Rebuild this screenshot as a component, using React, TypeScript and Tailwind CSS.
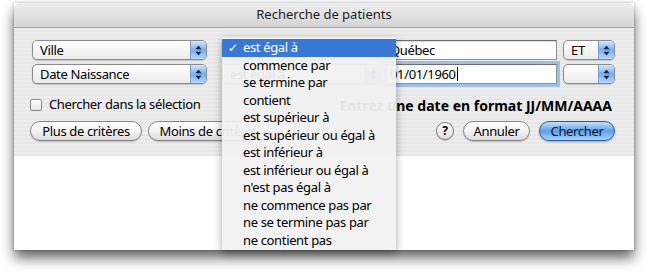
import React from 'react';

const operators = [
  'est égal à',
  'commence par',
  'se termine par',
  'contient',
  'est supérieur à',
  'est supérieur ou égal à',
  'est inférieur à',
  'est inférieur ou égal à',
  "n'est pas égal à",
  'ne commence pas par',
  'ne se termine pas par',
  'ne contient pas',
];

const PopupArrows: React.FC = () => (
  <svg width="7" height="11" viewBox="0 0 7 11">
    <path d="M3.5 0.5 L6.5 4.2 H0.5 Z M3.5 10.5 L6.5 6.8 H0.5 Z" fill="#16233a" />
  </svg>
);

const Popup: React.FC<{ label?: string; className: string }> = ({ label, className }) => (
  <div
    className={`flex h-[20px] ${className} overflow-hidden rounded-[5px] border border-[#8b8b8b] bg-gradient-to-b from-white to-[#ececec] shadow-[0_1px_1px_rgba(0,0,0,0.18)]`}
  >
    <div className="flex-1 truncate pl-[7px] text-[13px] leading-[18px] text-black">{label}</div>
    <div className="flex w-[16px] items-center justify-center border-l border-[#7b9cc8] bg-gradient-to-b from-[#d3e7fb] via-[#74aef0] to-[#b5d7fa]">
      <PopupArrows />
    </div>
  </div>
);

const TextField: React.FC<{ children: React.ReactNode; focused?: boolean }> = ({ children, focused }) => (
  <div
    className={`flex h-[20px] w-[171px] items-center border border-[#939393] border-t-[#6e6e6e] bg-white pl-[3px] text-[13px] leading-[18px] text-black ${
      focused ? 'shadow-[0_0_0_3px_#9dbfe9]' : 'shadow-[inset_0_1px_1px_rgba(0,0,0,0.15)]'
    }`}
  >
    {children}
  </div>
);

const Capsule: React.FC<{ children: React.ReactNode; className: string }> = ({ children, className }) => (
  <div
    className={`flex h-[20px] ${className} items-center justify-center rounded-full border border-[#858585] bg-gradient-to-b from-white via-[#f4f4f4] to-[#dcdcdc] text-[13px] leading-[18px] text-black shadow-[0_1px_1px_rgba(0,0,0,0.2)]`}
  >
    {children}
  </div>
);

export default function App() {
  return (
    <div className="relative h-[274px] w-[648px] overflow-hidden bg-white pt-[3px] pl-[14px] font-['Noto_Sans','DejaVu_Sans',sans-serif] tracking-[-0.35px]">
      <div className="w-[620px] shadow-[0_8px_12px_rgba(0,0,0,0.6),0_0_3px_rgba(0,0,0,0.25)]">
        {/* title bar */}
        <div className="flex h-[25px] items-center justify-center rounded-t-[6px] border-b border-[#a3a3a3] bg-gradient-to-b from-[#eeeeee] to-[#d4d4d4] text-[13px] tracking-normal text-[#1e1e1e]">
          Recherche de patients
        </div>

        {/* criteria */}
        <div className="h-[128px] bg-[repeating-linear-gradient(180deg,#ededed_0px,#ededed_2px,#e7e7e7_2px,#e7e7e7_4px)] pt-[12px] pl-[18px] pr-[19px]">
          <div className="flex items-center">
            <Popup label="Ville" className="w-[175px]" />
            <div className="ml-[15px]">
              <Popup label="est égal à" className="w-[160px]" />
            </div>
            <div className="ml-[4px]">
              <TextField>Québec</TextField>
            </div>
            <div className="ml-[6px]">
              <Popup label="ET" className="w-[52px]" />
            </div>
          </div>

          <div className="mt-[4px] flex items-center">
            <Popup label="Date Naissance" className="w-[175px]" />
            <div className="ml-[15px]">
              <Popup label="est égal à" className="w-[160px]" />
            </div>
            <div className="ml-[4px]">
              <TextField focused>
                01/01/1960
                <span className="ml-[1px] inline-block h-[14px] w-px bg-black" />
              </TextField>
            </div>
            <div className="ml-[6px]">
              <Popup className="w-[52px]" />
            </div>
          </div>

          <div className="mt-[10px] flex h-[22px] items-center justify-between">
            <div className="-ml-[2px] flex items-center">
              <div className="h-[12px] w-[12px] rounded-[2px] border border-[#8a8a8a] bg-gradient-to-b from-white to-[#e4e4e4]" />
              <span className="ml-[7px] text-[13px] text-black">Chercher dans la sélection</span>
            </div>
            <div className="mr-[3px] text-[14px] font-bold tracking-normal text-black">
              Entrez une date en format JJ/MM/AAAA
            </div>
          </div>

          <div className="mt-[5px] flex items-center justify-between">
            <div className="-ml-[2px] flex items-center gap-[6px]">
              <Capsule className="w-[112px]">Plus de critères</Capsule>
              <Capsule className="w-[122px]">Moins de critères</Capsule>
            </div>
            <div className="flex items-center">
              <div className="flex h-[18px] w-[18px] items-center justify-center rounded-full border border-[#7c7c7c] bg-gradient-to-b from-white to-[#dedede] text-[12px] font-bold text-black shadow-[0_1px_1px_rgba(0,0,0,0.2)]">
                ?
              </div>
              <Capsule className="ml-[9px] w-[67px]">Annuler</Capsule>
              <div className="ml-[9px] flex h-[20px] w-[76px] items-center justify-center rounded-full border border-[#2b5c9e] bg-gradient-to-b from-[#c4e0fb] via-[#5d9fe9] to-[#a9d4fb] text-[13px] leading-[18px] text-[#0b1630] shadow-[0_1px_2px_rgba(0,0,0,0.3)]">
                Chercher
              </div>
            </div>
          </div>
        </div>

        {/* results area */}
        <div className="h-[94px] bg-white" />
      </div>

      {/* open operator menu */}
      <div className="absolute left-[222px] top-[37px] h-[213px] w-[174px] bg-[#f1f1f1]/[0.94] pt-[2px] shadow-[0_3px_8px_rgba(0,0,0,0.35)]">
        {operators.map((op, i) => (
          <div
            key={op}
            className={`flex h-[17.5px] items-center text-[13px] ${i === 0 ? 'bg-[#3a78d6] text-white' : 'text-black'}`}
          >
            <span className="w-[21px] pl-[6px] text-[12px]">{i === 0 ? '✓' : ''}</span>
            <span>{op}</span>
          </div>
        ))}
      </div>
    </div>
  );
}
